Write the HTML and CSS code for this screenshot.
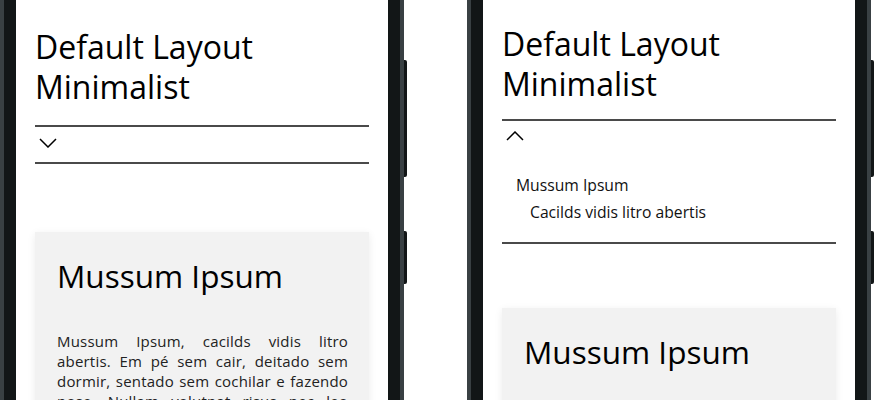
FILE: index.html
```html
<!DOCTYPE html>
<html lang="en">
<head>
  <meta charset="UTF-8" />
  <title>Default Layout Minimalist</title>
  <link rel="stylesheet" href="styles.css">
</head>
<body>

  <!-- Closed accordion -->
  <div class="device">
    <div class="phone">
      <div class="bezel">
        <div class="screen">
          <h1 class="title">Default Layout Minimalist</h1>

          <div class="accordion">
            <button class="accordion-toggle" aria-label="Expand">
              <svg width="18" height="10" viewBox="0 0 18 10"><polyline points="1,1 9,9 17,1" /></svg>
            </button>
          </div>

          <div class="card">
            <h2>Mussum Ipsum</h2>
            <p>Mussum Ipsum, cacilds vidis litro abertis. Em pé sem cair, deitado sem dormir, sentado sem cochilar e fazendo pose. Nullam volutpat risus nec leo commodo, ut interdum diam laoreet. Sapien in monti palavris qui num significa nadis i pareci latim.</p>
          </div>
        </div>
      </div>
    </div>
    <div class="side-keys">
      <span class="key key-long"></span>
      <span class="key key-short"></span>
    </div>
  </div>

  <!-- Open accordion -->
  <div class="device">
    <div class="phone">
      <div class="bezel">
        <div class="screen screen-open">
          <h1 class="title">Default Layout Minimalist</h1>

          <div class="accordion open">
            <button class="accordion-toggle" aria-label="Collapse">
              <svg width="18" height="10" viewBox="0 0 18 10"><polyline points="1,9 9,1 17,9" /></svg>
            </button>
            <ul class="accordion-list">
              <li>Mussum Ipsum
                <ul>
                  <li>Cacilds vidis litro abertis</li>
                </ul>
              </li>
            </ul>
          </div>

          <div class="card">
            <h2>Mussum Ipsum</h2>
            <p>Mussum Ipsum, cacilds vidis litro abertis. Em pé sem cair, deitado sem dormir, sentado sem cochilar e fazendo pose.</p>
          </div>
        </div>
      </div>
    </div>
    <div class="side-keys">
      <span class="key key-long"></span>
      <span class="key key-short"></span>
    </div>
  </div>

</body>
</html>
```

FILE: styles.css
```css
:root {
  --frame-edge: #394043;
  --frame: #121617;
  --line: #4a4a4a;
  --card-bg: #f2f2f2;
  --text: #000;
}

body {
  margin: 0;
  height: 100vh;
  overflow: hidden;
  display: flex;
  gap: 60px;
  background: #fff;
  font-family: 'Open Sans', 'DejaVu Sans', sans-serif;
  color: var(--text);
}

/* Phone frame */
.device {
  display: flex;
  height: 100%;
}

.phone {
  border-left: 4px solid var(--frame-edge);
  border-right: 4px solid var(--frame-edge);
}

.bezel {
  height: 100%;
  border-left: 12px solid var(--frame);
  border-right: 12px solid var(--frame);
}

.screen {
  width: 372px;
  height: 100%;
  box-sizing: border-box;
  overflow: hidden;
  padding: 27px 19px 0;
  background: #fff;
}
.screen-open {
  padding-top: 24px;
}

.side-keys {
  width: 3px;
  display: flex;
  flex-direction: column;
}
.key {
  display: block;
  background: var(--frame);
  border-radius: 0 2px 2px 0;
}
.key-long {
  margin-top: 60px;
  height: 117px;
}
.key-short {
  margin-top: 54px;
  height: 53px;
}

/* Heading */
.title {
  margin: 0 0 18px;
  font-size: 32px;
  font-weight: 500;
  line-height: 40px;
}
.screen-open .title {
  margin-bottom: 15px;
}

/* Accordion */
.accordion {
  border-top: 2px solid var(--line);
  border-bottom: 2px solid var(--line);
}

.accordion-toggle {
  display: block;
  padding: 11px 4px 14px;
  border: none;
  background: none;
  cursor: pointer;
}
.accordion-toggle svg {
  display: block;
  fill: none;
  stroke: var(--text);
  stroke-width: 1.5;
}
.open .accordion-toggle {
  padding-top: 10px;
}

.accordion-list {
  list-style: none;
  margin: 0;
  padding: 17px 14px 16px;
  font-size: 15.7px;
  line-height: 27px;
  color: #111;
}
.accordion-list ul {
  list-style: none;
  margin: 0;
  padding-left: 14px;
}

/* Card */
.card {
  margin-top: 68px;
  padding: 24px 21px 22px 22px;
  background: var(--card-bg);
  box-shadow: 0 2px 8px rgba(0, 0, 0, 0.08);
}
.screen-open .card {
  margin-top: 64px;
}

.card h2 {
  margin: 0;
  font-size: 31.5px;
  font-weight: 500;
  line-height: 40px;
}

.card p {
  margin: 35px 0 0;
  font-size: 15px;
  letter-spacing: 0.2px;
  line-height: 20px;
  text-align: justify;
  color: #222;
}
```
